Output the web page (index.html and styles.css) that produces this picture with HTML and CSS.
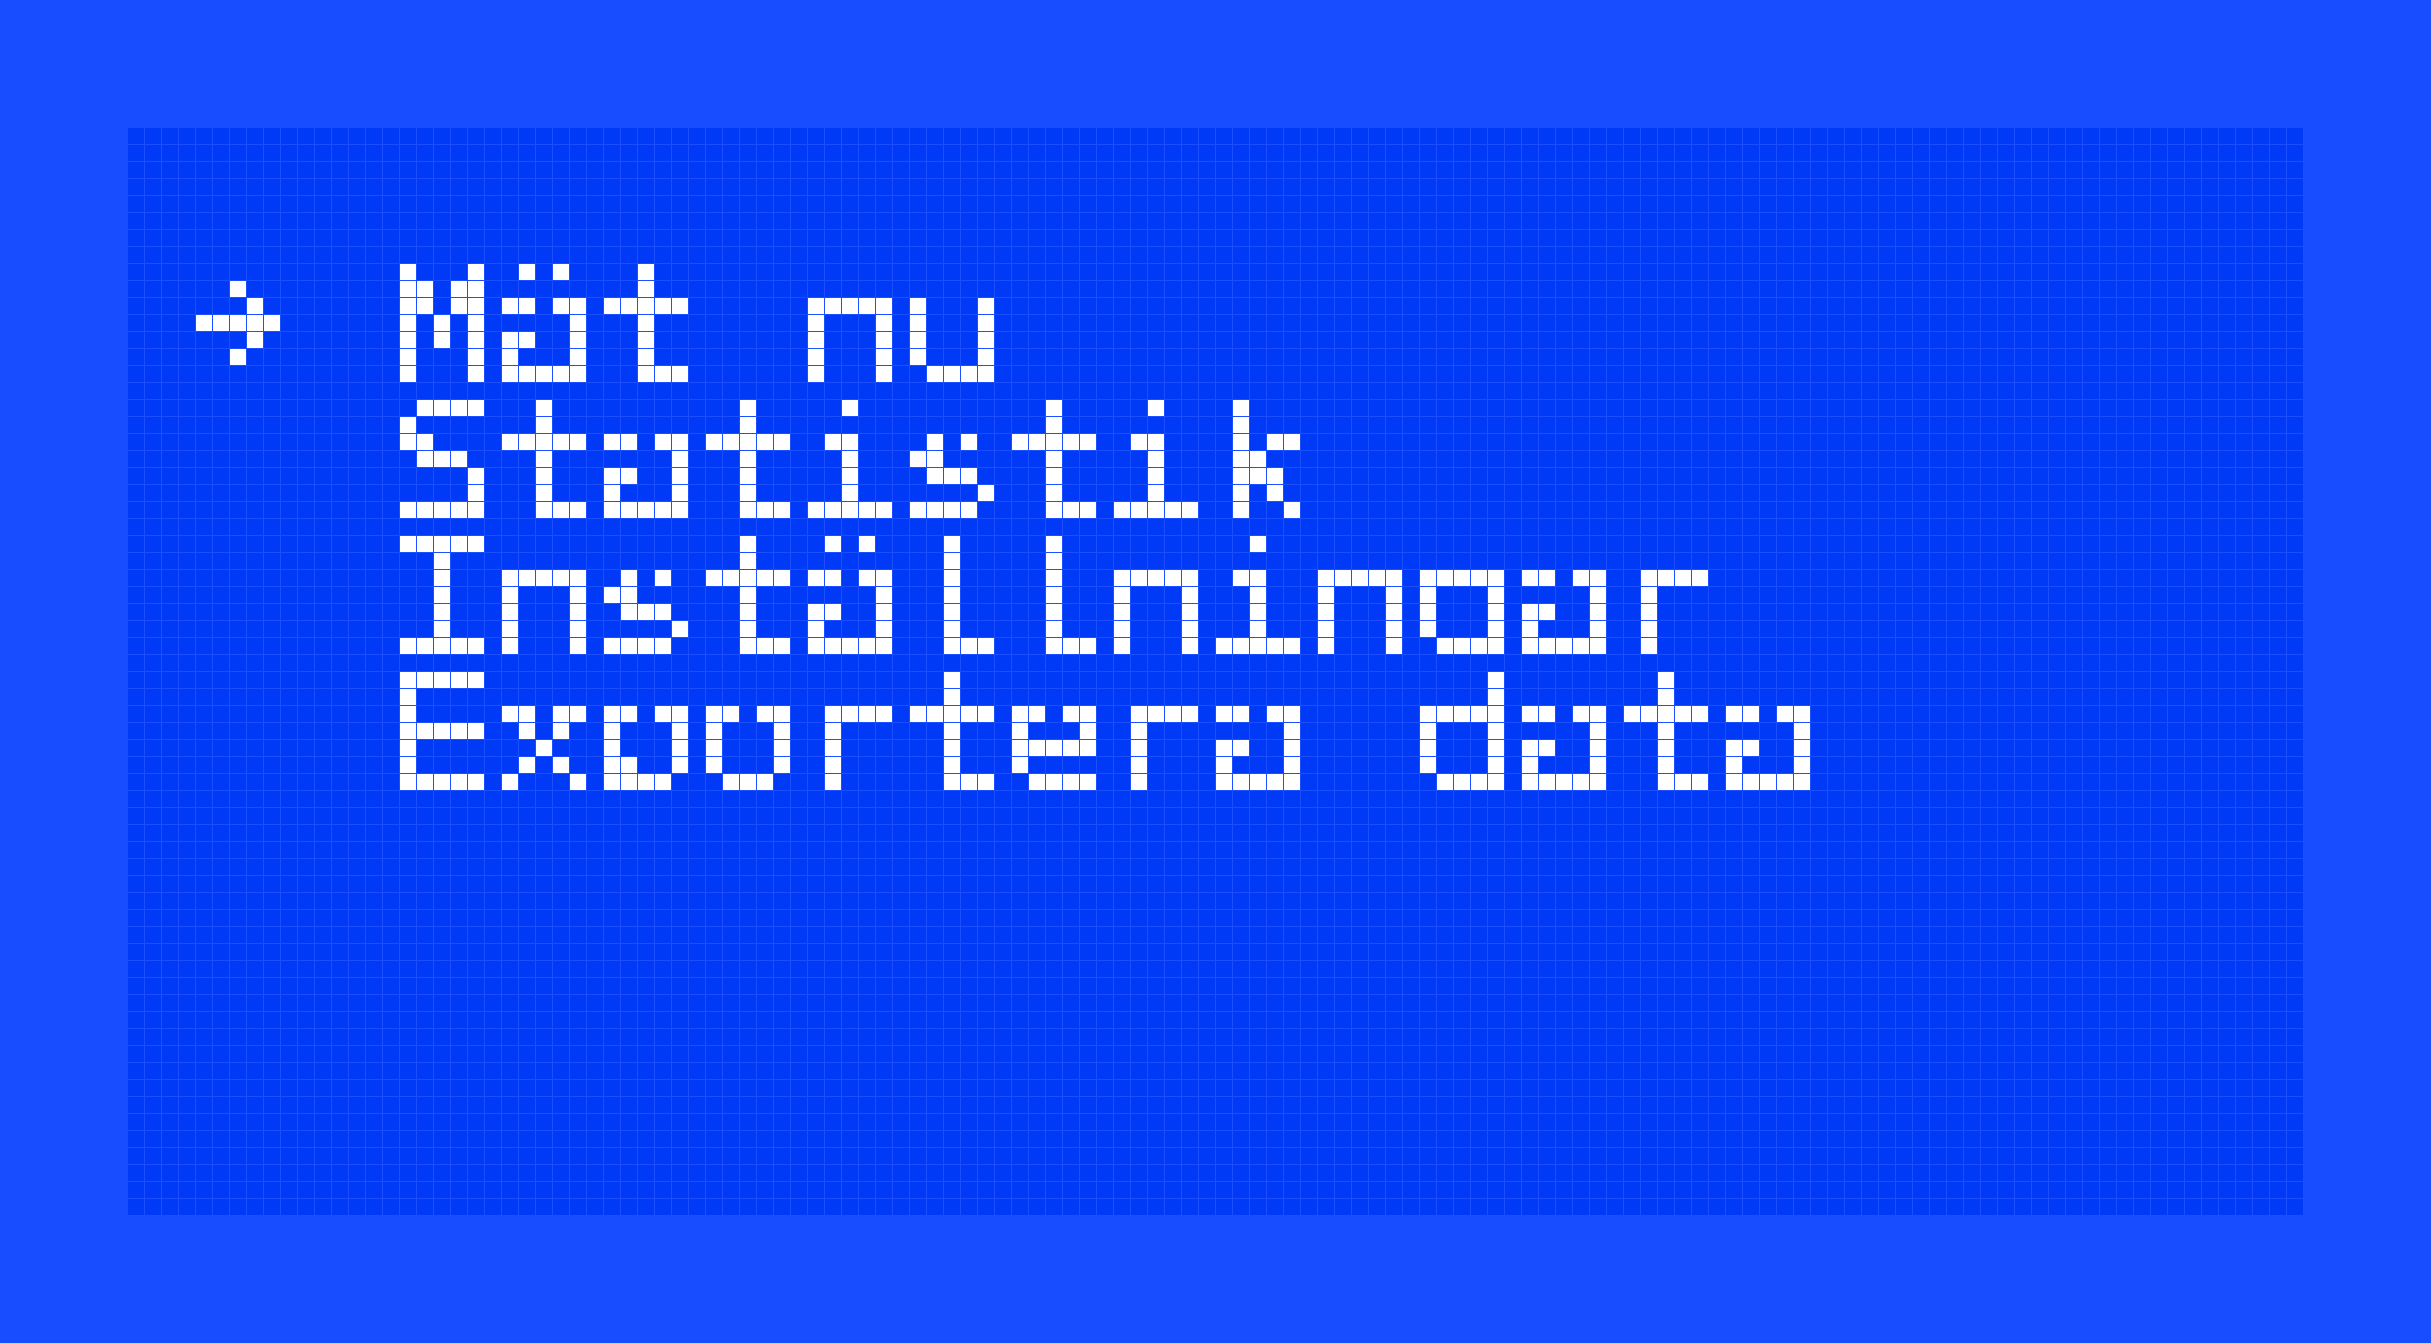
FILE: index.html
```html
<!DOCTYPE html>
<html lang="sv">
<head>
<meta charset="utf-8">
<title>Meny</title>
<link rel="stylesheet" href="styles.css">
</head>
<body>
<svg class="defs" width="0" height="0" aria-hidden="true" focusable="false">
  <filter id="lcd" x="0" y="0" width="100%" height="100%" color-interpolation-filters="sRGB">
    <feOffset in="SourceGraphic" dy="2" result="down"/>
    <feOffset in="SourceGraphic" dy="-2" result="up"/>
    <feMerge result="thick">
      <feMergeNode in="SourceGraphic"/>
      <feMergeNode in="down"/>
      <feMergeNode in="up"/>
    </feMerge>
    <feFlood x="7" y="7" width="1" height="1" flood-color="#ffffff" result="dot"/>
    <feComposite in="dot" in2="dot" operator="over" x="0" y="0" width="17" height="17" result="cell"/>
    <feTile in="cell" result="grid"/>
    <feComposite in="thick" in2="grid" operator="in" result="sampled"/>
    <feComponentTransfer in="sampled" result="hard">
      <feFuncA type="discrete" tableValues="0 1"/>
    </feComponentTransfer>
    <feFlood flood-color="#ffffff" result="white"/>
    <feComposite in="white" in2="hard" operator="in" result="lit"/>
    <feMorphology in="lit" operator="dilate" radius="7" result="big"/>
    <feOffset in="big" dx="1" result="bx"/>
    <feOffset in="big" dy="1" result="by"/>
    <feOffset in="big" dx="1" dy="1" result="bxy"/>
    <feMerge>
      <feMergeNode in="big"/>
      <feMergeNode in="bx"/>
      <feMergeNode in="by"/>
      <feMergeNode in="bxy"/>
    </feMerge>
  </filter>
</svg>
<main class="screen">
  <ul class="menu">
    <li class="item">
      <svg class="cursor" width="204" height="119" viewBox="0 0 204 119" aria-label="vald">
        <rect x="37" y="20" width="9" height="9"/>
        <rect x="54" y="37" width="9" height="9"/>
        <rect x="3" y="54" width="77" height="9"/>
        <rect x="54" y="71" width="9" height="9"/>
        <rect x="37" y="88" width="9" height="9"/>
      </svg>
      <span class="label">Mät nu</span>
    </li>
    <li class="item"><span class="cursor-space"></span><span class="label">Statistik</span></li>
    <li class="item"><span class="cursor-space"></span><span class="label">Inställningar</span></li>
    <li class="item"><span class="cursor-space"></span><span class="label">Exportera data</span></li>
  </ul>
</main>
</body>
</html>
```

FILE: styles.css
```css
html, body {
  margin: 0;
}

body {
  background: #174cff;
  padding: 128px 0 0 128px;
  height: 1343px;
  box-sizing: border-box;
  overflow: hidden;
}

.defs {
  display: block;
  width: 0;
  height: 0;
}

.screen {
  width: 2176px;
  height: 1088px;
  background-color: #003af6;
  background-image:
    linear-gradient(90deg, transparent 16px, #1b4fff 16px),
    linear-gradient(180deg, transparent 16px, #1b4fff 16px);
  background-size: 17px 17px;
}

.menu {
  list-style: none;
  margin: 0;
  height: 100%;
  box-sizing: border-box;
  padding: 130px 0 0 68px;
  font-family: "DejaVu Sans Mono", monospace;
  font-size: 160px;
  line-height: 136px;
  color: #ffffff;
  filter: url(#lcd);
}

.item {
  display: flex;
  align-items: flex-start;
  height: 119px;
  margin-bottom: 17px;
  overflow: hidden;
}

.cursor {
  flex: none;
  display: block;
  margin-top: 6px;
  fill: #ffffff;
}

.cursor-space {
  flex: none;
  width: 204px;
}

.label {
  display: block;
  white-space: pre;
  letter-spacing: -6.86px;
  margin-left: -13.4px;
  transform-origin: 0 0;
  transform: scaleX(1.14);
}
```
